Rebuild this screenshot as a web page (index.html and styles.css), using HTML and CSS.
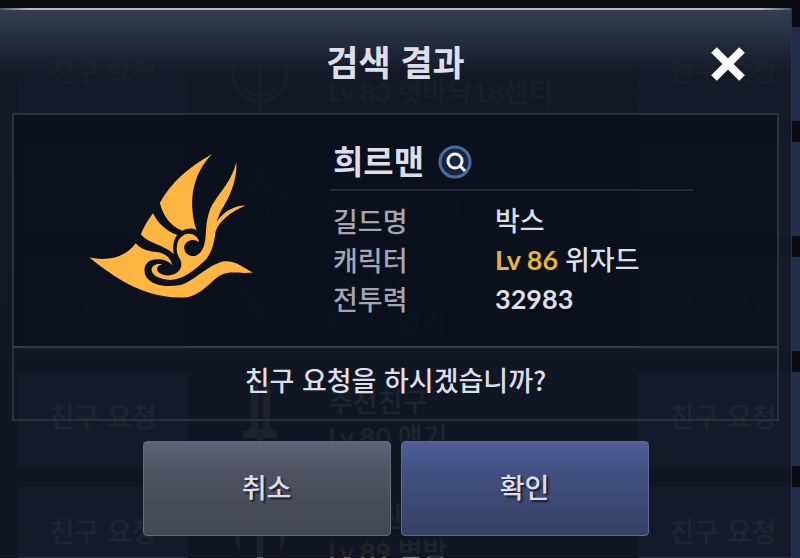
FILE: index.html
```
<!DOCTYPE html>
<html lang="ko">
<head>
    <meta charset="UTF-8">
    <meta name="viewport" content="width=device-width, initial-scale=1.0">
    <title>검색 결과</title>
    <link rel="stylesheet" href="styles.css">
</head>
<body>
    <!-- Recommended friends list, dimmed by the dialog -->
    <ul class="friend-list" aria-hidden="true">
        <li class="friend">
            <span class="request">친구 요청</span>
            <svg class="weapon" viewBox="0 0 60 90"><circle cx="30" cy="45" r="27"/><path d="M30 5V88M14 60Q30 72 46 60"/></svg>
            <div class="who"><p>&nbsp;</p><p class="level">Lv 83 <span>혓바닥18센티</span></p></div>
            <span class="request">친구 요청</span>
        </li>
        <li class="friend">
            <span class="request">친구 요청</span>
            <svg class="weapon" viewBox="0 0 60 90"><circle cx="30" cy="32" r="11"/><path d="M30 10V78M22 44V66L30 76L38 66V44M6 50Q8 66 30 76Q52 66 54 50"/></svg>
            <div class="who"><p>&nbsp;</p><p class="level">Lv 100 <span>각시</span></p></div>
            <span class="request">친구 요청</span>
        </li>
        <li class="friend">
            <span class="request">친구 요청</span>
            <svg class="weapon" viewBox="0 0 60 90"><path class="solid" d="M2 22Q16 26 38 54L32 62Q10 44 2 22Z"/><path d="M34 58L62 84"/></svg>
            <div class="who"><p>추천친구</p><p class="level">Lv 90 <span>뮐러</span></p></div>
            <span class="request">친구 요청</span>
        </li>
        <li class="friend">
            <span class="request">친구 요청</span>
            <svg class="weapon" viewBox="0 0 60 90"><path class="solid" d="M21 8H28V55H33V8H40V52L44 57H47V64H34L30 69L26 64H13V57H17L21 52Z"/></svg>
            <div class="who"><p>추천친구</p><p class="level">Lv 80 <span>얘기</span></p></div>
            <span class="request">친구 요청</span>
        </li>
        <li class="friend">
            <span class="request">친구 요청</span>
            <svg class="weapon" viewBox="0 0 60 90"><path class="solid" d="M27 20H33V80L30 88L27 80ZM7 30Q2 48 10 64Q8 48 11 30ZM53 30Q58 48 50 64Q52 48 49 30Z"/></svg>
            <div class="who"><p>추천친구</p><p class="level">Lv 89 <span>벽밤</span></p></div>
            <span class="request">친구 요청</span>
        </li>
    </ul>

    <div class="dialog" role="dialog" aria-labelledby="dialogTitle">
        <header class="dialog-header">
            <h1 id="dialogTitle">검색 결과</h1>
            <button class="close" aria-label="닫기">
                <svg viewBox="0 0 36 36"><path d="M4 4L32 32M32 4L4 32"/></svg>
            </button>
        </header>

        <div class="panel">
            <section class="result">
                <svg class="emblem" viewBox="50 40 500 440">
                    <path d="M425 43C350 85 300 130 268 190C278 230 300 258 335 273C352 264 368 264 378 272C355 200 358 110 425 43Z"/>
                    <path d="M248 220C232 240 220 260 211 284C235 312 275 312 310 342C305 320 310 300 320 285C290 275 262 250 248 220Z"/>
                    <path d="M57 353C120 365 165 350 196 310C210 328 235 335 258 336C285 340 300 352 305 376C290 358 262 354 240 362C220 372 218 395 228 412C250 440 290 442 330 435C370 425 410 375 460 364C500 362 520 385 547 398C500 402 480 392 455 404C420 420 400 462 350 472C220 480 130 410 57 353Z"/>
                    <path d="M497 68C500 110 485 160 450 215L438 245C460 215 490 197 525 197C480 215 445 245 435 275C430 310 425 340 400 365C370 392 340 418 300 420C265 418 243 405 243 388C246 375 260 370 275 373C250 380 256 404 293 407C325 404 338 384 330 360C318 345 316 325 322 305C332 285 350 278 366 283C378 288 384 296 386 307C368 294 346 302 341 320C340 340 356 351 374 348C392 342 400 325 404 300C408 265 405 235 425 195C450 155 485 120 497 68Z"/>
                </svg>

                <div class="info">
                    <div class="name">
                        <h2>희르맨</h2>
                        <button class="lookup" aria-label="상세 보기">
                            <svg viewBox="0 0 34 34"><circle class="ring" cx="17" cy="17" r="15"/><circle class="lens" cx="17" cy="16" r="7"/><path class="lens" d="M22 21L27 26"/></svg>
                        </button>
                    </div>
                    <dl class="stats">
                        <dt>길드명</dt>
                        <dd>박스</dd>
                        <dt>캐릭터</dt>
                        <dd><b class="gold">Lv 86</b> 위자드</dd>
                        <dt>전투력</dt>
                        <dd><b>32983</b></dd>
                    </dl>
                </div>
            </section>
            <p class="question">친구 요청을 하시겠습니까?</p>
        </div>

        <div class="actions">
            <button class="cancel">취소</button>
            <button class="confirm">확인</button>
        </div>
    </div>
</body>
</html>
```
FILE: styles.css
```
* {
    box-sizing: border-box;
}

body {
    margin: 0;
    min-height: 100vh;
    position: relative;
    overflow: hidden;
    background: #0b0c12;
    color: #dcdee8;
    font-family: "Noto Sans CJK KR", sans-serif;
    font-size: 27px;
    font-weight: 500;
    line-height: 39px;
}

h1, h2, p, ul, dl, dd {
    margin: 0;
    padding: 0;
}

button {
    padding: 0;
    border: none;
    background: none;
    color: inherit;
    font: inherit;
    cursor: pointer;
}

svg {
    display: block;
}

/* Friend list behind the dialog */
.friend-list {
    position: absolute;
    inset: 0 -8px 0 18px;
    padding-top: 27px;
    overflow: hidden;
    list-style: none;
}

.friend {
    display: grid;
    grid-template-columns: 170px 140px 1fr 170px;
    align-items: center;
    height: 94px;
    margin-bottom: 21px;
}

.request {
    height: 94px;
    line-height: 88px;
    text-align: center;
    background: #222c4b;
    color: #747682;
}

.weapon {
    width: 60px;
    height: 90px;
    margin-left: 42px;
    fill: none;
    stroke: #6b6048;
    stroke-width: 3;
}

.weapon .solid {
    fill: #6b6048;
    stroke: none;
}

.who {
    line-height: 36px;
    color: #77757a;
}

.level {
    font-family: Lato, "Noto Sans CJK KR", sans-serif;
    font-weight: 700;
    color: #7a6840;
}

.level span {
    color: #77757a;
    font-weight: 500;
}

/* Dialog */
.dialog {
    position: absolute;
    inset: 8px 8px 1px 0;
    padding: 0 12px;
    border-right: 1px solid #2b3344;
    background: linear-gradient(#354053, #2b3445 20px, #1f2537 44px, rgba(20, 26, 40, 0.6) 66px, rgba(20, 26, 40, 0.4) 280px, rgba(20, 26, 40, 0) 370px), rgba(18, 24, 37, 0.88);
}

.dialog::before {
    content: "";
    position: absolute;
    inset: 0 0 auto 0;
    height: 2px;
    background: linear-gradient(90deg, #4a5565, #b4bac4 30px, #b4bac4 calc(100% - 30px), #4a5565);
}

.dialog-header {
    display: grid;
    grid-template-columns: 1fr auto 1fr;
    align-items: center;
    height: 105px;
    padding: 0 33px;
}

.dialog-header h1 {
    grid-column: 2;
    font-size: 35px;
    font-weight: 700;
    line-height: 52px;
}

.close {
    justify-self: end;
    margin-top: 6px;
}

.close svg {
    width: 36px;
    height: 36px;
    fill: none;
    stroke: #fff;
    stroke-width: 8;
}

.panel {
    border: 2px solid #2b313e;
}

.result {
    display: grid;
    grid-template-columns: 316px minmax(0, 363px);
    min-height: 231px;
    background: rgba(9, 15, 26, 0.8);
}

.emblem {
    width: 167px;
    height: 147px;
    margin: 38px auto 0 73px;
    fill: #ffb53f;
}

.info {
    padding-top: 24px;
}

.name {
    display: flex;
    align-items: center;
    gap: 14px;
    height: 52px;
    padding: 0 3px 4px;
    border-bottom: 2px solid #242a36;
}

.name h2 {
    font-size: 33px;
    font-weight: 700;
    line-height: 42px;
    padding-bottom: 4px;
}

.lookup svg {
    width: 34px;
    height: 34px;
}

.ring {
    fill: #172542;
    stroke: #4a6ca0;
    stroke-width: 3;
}

.lens {
    fill: none;
    stroke: #f4f5f8;
    stroke-width: 3;
}

.stats {
    display: grid;
    grid-template-columns: 162px 1fr;
    padding: 10px 3px 0;
}

.stats dt {
    color: #a2a5b2;
}

.stats dd {
    font-family: Lato, "Noto Sans CJK KR", sans-serif;
}

.gold {
    color: #e6b43a;
}

.question {
    padding: 12px 0 20px;
    border-top: 2px solid #343a48;
    text-align: center;
}

.actions {
    display: flex;
    justify-content: center;
    gap: 10px;
    padding-top: 20px;
}

.actions button {
    width: 248px;
    height: 95px;
    padding-bottom: 4px;
    border: 1px solid #666b7d;
    border-radius: 4px;
    text-shadow: 2px 2px 2px #1a1c26;
}

.actions .cancel {
    background: linear-gradient(#60647a, #4e5262 30px, #434653);
}

.actions .confirm {
    border-color: #5b6c9c;
    background: linear-gradient(#4e5e98, #415080 30px, #354266);
}
```
